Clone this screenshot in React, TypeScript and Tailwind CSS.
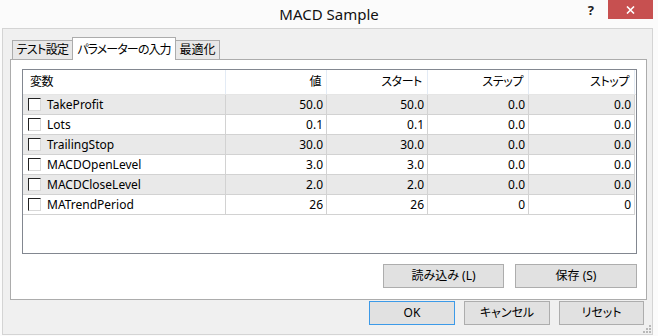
import React from "react";

const rows = [
  ["TakeProfit", "50.0", "50.0", "0.0", "0.0"],
  ["Lots", "0.1", "0.1", "0.0", "0.0"],
  ["TrailingStop", "30.0", "30.0", "0.0", "0.0"],
  ["MACDOpenLevel", "3.0", "3.0", "0.0", "0.0"],
  ["MACDCloseLevel", "2.0", "2.0", "0.0", "0.0"],
  ["MATrendPeriod", "26", "26", "0", "0"],
];

const colW = ["w-[203px]", "w-[101px]", "w-[101px]", "w-[101px]", "w-[106px]"];

function Checkbox() {
  return (
    <div className="w-[13px] h-[13px] bg-white border-t border-l border-t-[#222] border-l-[#222] border-r border-b border-r-[#d8d8d8] border-b-[#d8d8d8] shrink-0" />
  );
}

function Btn({ children, w, focus }: { children: React.ReactNode; w: string; focus?: boolean }) {
  return (
    <div
      className={`${w} h-[24px] flex items-center justify-center whitespace-nowrap bg-[#e1e1e1] border ${
        focus ? "border-[#3c9ae8]" : "border-[#adadad]"
      } text-[12px] [font-feature-settings:'palt']`}
    >
      {children}
    </div>
  );
}

export default function App() {
  return (
    <div className="w-[658px] h-[336px] bg-[#fbfbfb] overflow-hidden text-black text-[12px] font-['Noto_Sans','Noto_Sans_CJK_JP',sans-serif]">
      {/* title bar */}
      <div className="h-[28px] flex items-start">
        <div className="flex-1" />
        <div className="text-[15px] leading-none mt-[7px] text-[#111]">MACD Sample</div>
        <div className="flex-1 flex justify-end items-start">
          <div className="font-bold text-[13px] leading-none mt-[4px] mr-[14px] text-[#222]">?</div>
          <div className="w-[45px] h-[19px] bg-[#c75050] mr-[5px] flex items-center justify-center">
            <svg width="9" height="8" viewBox="0 0 9 8">
              <path d="M1 0.5 L8 7.5 M8 0.5 L1 7.5" stroke="white" strokeWidth="1.6" />
            </svg>
          </div>
        </div>
      </div>

      {/* client */}
      <div className="relative ml-[2px] w-[651px] h-[307px] border border-[#d4d4d4] bg-[#f0f0f0] pl-[7px] pt-[8px] [font-feature-settings:'palt']">
        {/* tabs */}
        <div className="relative z-10 flex items-end h-[23px] -mb-px ml-[2px] whitespace-nowrap">
          <div className="w-[61px] h-[20px] border border-[#acacac] bg-[#e8e8e8] flex items-center justify-center text-[12px] tracking-[-0.6px]">
            テスト設定
          </div>
          <div className="w-[104px] h-[23px] border-t border-l border-r border-[#acacac] bg-white flex items-start justify-center pt-[3px] text-[12px] -mx-px tracking-[-0.9px]">
            パラメーターの入力
          </div>
          <div className="w-[45px] h-[20px] border border-[#acacac] bg-[#e8e8e8] flex items-center justify-center text-[12px]">
            最適化
          </div>
        </div>

        {/* panel */}
        <div className="w-[637px] h-[241px] border border-[#acacac] bg-white pl-[11px] pr-[9px] pt-[9px]">
          <div className="w-[615px] h-[185px] border border-[#828790] bg-white">
            {/* header */}
            <div className="flex h-[25px] border-b border-[#e5e5e5]">
              {["変数", "値", "スタート", "ステップ", "ストップ"].map((h, i) => (
                <div
                  key={h}
                  className={`${colW[i]} h-full flex items-center border-r border-[#e3ebf5] tracking-[-0.4px] ${
                    i === 0 ? "pl-[7px]" : "justify-end pr-[5px]"
                  }`}
                >
                  {h}
                </div>
              ))}
            </div>
            {rows.map((r, ri) => (
              <div key={r[0]} className={`flex h-[20px] ${ri % 2 === 0 ? "bg-[#e9e9e9]" : "bg-white"} w-[612px]`}>
                {r.map((c, i) => (
                  <div
                    key={i}
                    className={`${colW[i]} h-full flex items-center border-r border-b border-[#d2d2d2] ${
                      i === 0 ? "pl-[5px] gap-[6px]" : "justify-end pr-[3px]"
                    }`}
                  >
                    {i === 0 && <Checkbox />}
                    <span>{c}</span>
                  </div>
                ))}
              </div>
            ))}
          </div>
          <div className="mt-[10px] flex justify-end gap-[11px]">
            <Btn w="w-[121px]">読み込み (L)</Btn>
            <Btn w="w-[122px]">保存 (S)</Btn>
          </div>
        </div>

        {/* bottom buttons */}
        <div className="mt-[1px] flex justify-end gap-[9px] pr-[8px]">
          <Btn w="w-[86px]" focus>
            OK
          </Btn>
          <Btn w="w-[86px]">キャンセル</Btn>
          <Btn w="w-[85px]">リセット</Btn>
        </div>

        {/* grip */}
        <svg className="absolute right-[1px] bottom-[1px]" width="8" height="8" viewBox="0 0 8 8">
          <rect x="6" y="0" width="2" height="2" fill="#b8b8b8" />
          <rect x="3" y="3" width="2" height="2" fill="#b8b8b8" />
          <rect x="6" y="3" width="2" height="2" fill="#b8b8b8" />
          <rect x="0" y="6" width="2" height="2" fill="#b8b8b8" />
          <rect x="3" y="6" width="2" height="2" fill="#b8b8b8" />
          <rect x="6" y="6" width="2" height="2" fill="#b8b8b8" />
        </svg>
      </div>
    </div>
  );
}
